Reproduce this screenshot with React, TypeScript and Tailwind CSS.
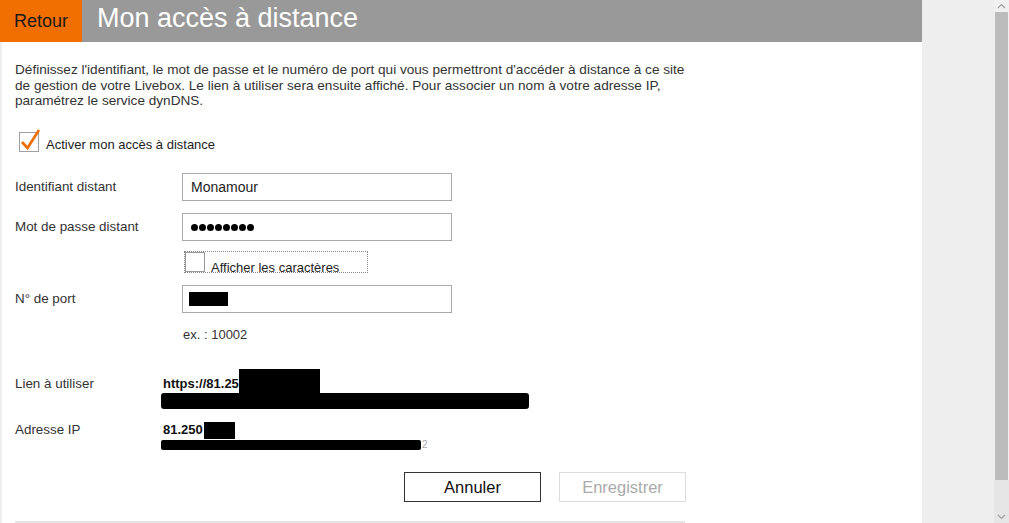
export default function App() {
  return (
    <div className="flex h-[523px] w-[1009px] overflow-hidden bg-white font-['Liberation_Sans',Arial,sans-serif] text-[#333]">
      {/* main column */}
      <div className="flex w-[922px] flex-col">
        <header className="flex h-[42px] shrink-0 bg-[#999999]">
          <button className="flex w-[82px] items-center bg-[#f16e00] pl-[14px] text-[18px] text-[#1a1a1a]">
            Retour
          </button>
          <h1 className="pl-[15px] text-[27px] leading-[36px] text-white">Mon accès à distance</h1>
        </header>

        <div className="flex-1 border-l-2 border-[#eeeeee] pl-[13px]">
          <div className="w-[671px]">
            <p className="pt-[20px] text-[13.6px] leading-[15.5px] text-[#333]">
              Définissez l'identifiant, le mot de passe et le numéro de port qui vous permettront d'accéder à distance à ce site
              <br />
              de gestion de votre Livebox. Le lien à utiliser sera ensuite affiché. Pour associer un nom à votre adresse IP,
              <br />
              paramétrez le service dynDNS.
            </p>

            {/* activer */}
            <div className="mt-[23px] flex h-[20px] items-end">
              <div className="relative ml-[4px] h-[20px] w-[20px] border border-[#a0a0a0] bg-white">
                <svg className="absolute -top-[5px] left-0" width="24" height="24" viewBox="0 0 24 24" fill="none">
                  <path d="M2 14 L7.5 20 L19 2" stroke="#f16e00" strokeWidth="2.6" strokeLinejoin="miter" />
                </svg>
              </div>
              <span className="ml-[7px] text-[13px] leading-[15px] text-[#222]">Activer mon accès à distance</span>
            </div>

            {/* identifiant */}
            <div className="mt-[21.5px] flex h-[28px] items-center">
              <label className="w-[167px] text-[13.4px] text-[#333]">Identifiant distant</label>
              <div className="flex h-[28px] w-[270px] items-center border border-[#aaaaaa] pl-[8px] text-[14px] text-[#222]">
                Monamour
              </div>
            </div>

            {/* mot de passe */}
            <div className="mt-[12px] flex h-[28px] items-center">
              <label className="w-[167px] text-[13.4px] text-[#333]">Mot de passe distant</label>
              <div className="flex h-[28px] w-[270px] items-center gap-[1px] border border-[#aaaaaa] pl-[8px]">
                {[0, 1, 2, 3, 4, 5, 6, 7].map((i) => (
                  <span key={i} className="h-[7px] w-[7px] rounded-full bg-black" />
                ))}
              </div>
            </div>

            {/* afficher */}
            <div className="ml-[169px] mt-[10px] flex h-[22px] w-[184px] items-end border border-dotted border-[#888]">
              <div className="h-[20px] w-[20px] self-start border border-[#999] bg-white" />
              <span className="relative top-[3px] ml-[6px] text-[13px] leading-[15px] text-[#222]">Afficher les caractères</span>
            </div>

            {/* port */}
            <div className="mt-[12px] flex h-[28px] items-center">
              <label className="w-[167px] text-[13.4px] text-[#333]">N° de port</label>
              <div className="flex h-[28px] w-[270px] items-center border border-[#aaaaaa] pl-[6px]">
                <span className="h-[14px] w-[39px] bg-black" />
              </div>
            </div>
            <div className="ml-[168px] mt-[13.5px] text-[13px] leading-[15px] text-[#333]">ex. : 10002</div>

            {/* lien */}
            <div className="mt-[34px] flex">
              <span className="w-[148px] text-[13.4px] leading-[16px] text-[#333]">Lien à utiliser</span>
              <div>
                <div className="relative text-[13px] font-bold leading-[16px] text-[#111]">
                  https://81.25
                  <span className="absolute left-[76px] top-[-7px] h-[24px] w-[81px] bg-black" />
                </div>
                <div className="ml-[-2px] mt-[1px] h-[16px] w-[368px] rounded-[3px] bg-black" />
              </div>
            </div>

            {/* adresse ip */}
            <div className="mt-[13.5px] flex">
              <span className="w-[148px] text-[13.4px] leading-[16px] text-[#333]">Adresse IP</span>
              <div>
                <div className="relative text-[13px] font-bold leading-[16px] text-[#111]">
                  81.250
                  <span className="absolute left-[41px] top-[-0.5px] h-[17px] w-[31px] bg-black" />
                </div>
                <div className="ml-[-2px] mt-[2px] flex items-center">
                  <div className="h-[10px] w-[260px] rounded-[2px] bg-black" />
                  <span className="ml-[1px] text-[10px] leading-[10px] text-[#aaa]">2</span>
                </div>
              </div>
            </div>

            {/* buttons */}
            <div className="mt-[22px] flex justify-end gap-[18px]">
              <button className="h-[30px] w-[137px] border border-[#333] bg-white text-[16.5px] text-[#111]">Annuler</button>
              <button className="h-[30px] w-[127px] border border-[#dddddd] bg-white text-[16.5px] text-[#aaaaaa]">
                Enregistrer
              </button>
            </div>
            <div className="mt-[19px] h-[2px] w-[670px] bg-[#e6e6e6]" />
          </div>
        </div>
      </div>

      {/* side gray */}
      <div className="w-[72px] bg-[#eeeeee]" />

      {/* scrollbar */}
      <div className="flex w-[15px] flex-col bg-[#f0f0f0]">
        <div className="flex h-[12px] items-center justify-center">
          <svg width="9" height="6" viewBox="0 0 9 6" fill="none">
            <path d="M1 5 L4.5 1.5 L8 5" stroke="#a0a0a0" strokeWidth="1.2" />
          </svg>
        </div>
        <div className="mx-[1px] h-[468px] bg-[#bcbcbc]" />
        <div className="flex-1 bg-[#e6e6e6]" />
        <div className="flex h-[12px] items-center justify-center bg-[#e6e6e6]">
          <svg width="9" height="6" viewBox="0 0 9 6" fill="none">
            <path d="M1 1 L4.5 4.5 L8 1" stroke="#a0a0a0" strokeWidth="1.2" />
          </svg>
        </div>
      </div>
    </div>
  );
}
